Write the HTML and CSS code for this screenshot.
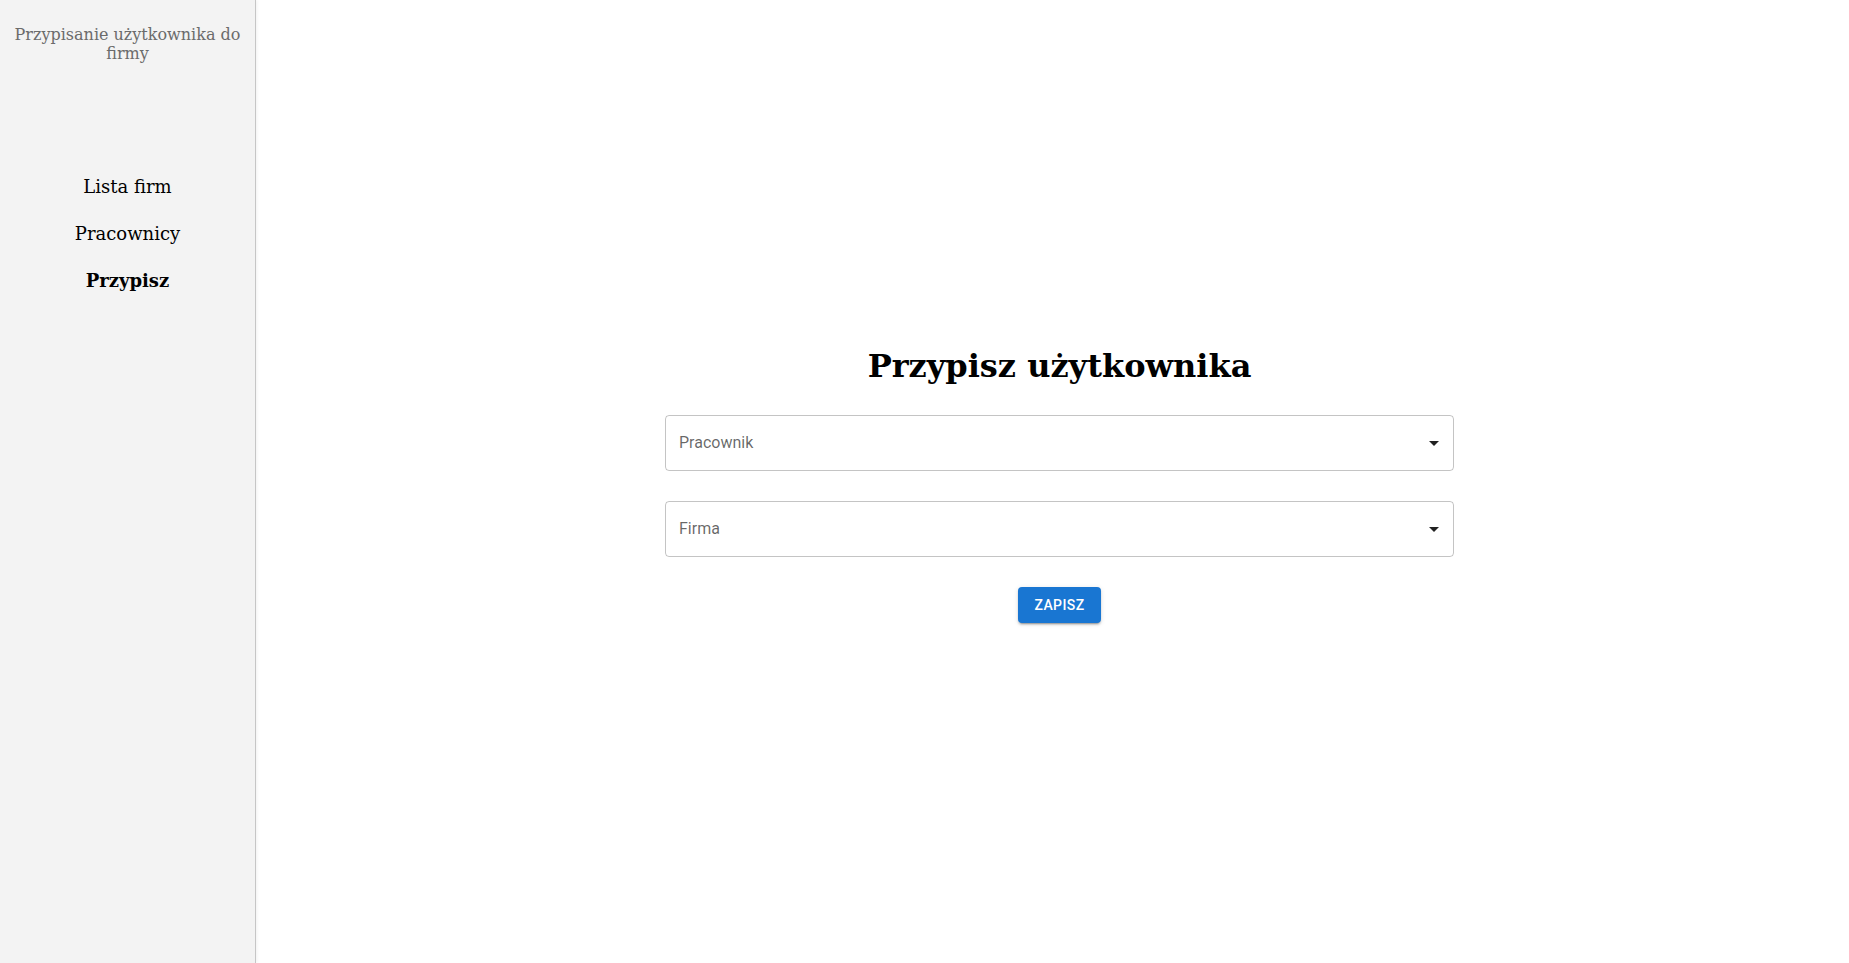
FILE: index.html
```html
<!DOCTYPE html>
<html lang="pl">
<head>
<meta charset="utf-8">
<title>Przypisz użytkownika</title>
<link rel="stylesheet" href="styles.css">
</head>
<body>
<aside class="sidebar">
  <div class="sidebar-title">Przypisanie użytkownika do firmy</div>
  <nav class="nav">
    <a class="nav-item" href="#">Lista firm</a>
    <a class="nav-item" href="#">Pracownicy</a>
    <a class="nav-item active" href="#">Przypisz</a>
  </nav>
</aside>
<main class="main">
  <h1 class="heading">Przypisz użytkownika</h1>
  <form class="form">
    <div class="select">
      <span class="select-label">Pracownik</span>
      <svg class="select-icon" viewBox="0 0 24 24" width="24" height="24"><path d="M7 10l5 5 5-5z"/></svg>
    </div>
    <div class="select">
      <span class="select-label">Firma</span>
      <svg class="select-icon" viewBox="0 0 24 24" width="24" height="24"><path d="M7 10l5 5 5-5z"/></svg>
    </div>
    <button type="button" class="btn">Zapisz</button>
  </form>
</main>
</body>
</html>
```

FILE: styles.css
```css
html, body {
  margin: 0;
  padding: 0;
  height: 100%;
}
body {
  display: flex;
  font-family: "DejaVu Serif", serif;
  background: #ffffff;
  color: #000;
}
.sidebar {
  width: 255px;
  flex: 0 0 255px;
  background: #f3f3f3;
  border-right: 1px solid #c6c6c6;
  box-shadow: 1px 0 3px rgba(0, 0, 0, 0.06);
  padding-top: 25px;
  box-sizing: content-box;
  text-align: center;
}
.sidebar-title {
  font-size: 16px;
  line-height: normal;
  color: #6b6b6b;
  padding: 0 10px;
}
.nav {
  display: flex;
  flex-direction: column;
  align-items: center;
  margin-top: 100px;
}
.nav-item {
  font-size: 18px;
  line-height: normal;
  padding: 13px 0;
  color: #000;
  text-decoration: none;
}
.nav-item.active {
  font-weight: bold;
}
.main {
  flex: 1;
  display: flex;
  flex-direction: column;
  align-items: center;
  justify-content: center;
  padding-left: 14px;
  padding-top: 7px;
}
.heading {
  font-size: 32px;
  font-weight: bold;
  line-height: normal;
  margin: 0 0 30px;
}
.form {
  width: 789px;
  display: flex;
  flex-direction: column;
  align-items: center;
  gap: 30px;
}
.select {
  width: 100%;
  height: 56px;
  box-sizing: border-box;
  border: 1px solid rgba(0, 0, 0, 0.23);
  border-radius: 4px;
  display: flex;
  align-items: center;
  padding: 0 7px 0 13px;
  font-family: Roboto, "Liberation Sans", sans-serif;
}
.select-label {
  flex: 1;
  font-size: 16px;
  color: rgba(0, 0, 0, 0.6);
}
.select-icon {
  fill: rgba(0, 0, 0, 0.87);
}
.btn {
  font-family: Roboto, "Liberation Sans", sans-serif;
  font-weight: 500;
  font-size: 14px;
  line-height: 1.75;
  letter-spacing: 0.02857em;
  text-transform: uppercase;
  color: #fff;
  background: #1976d2;
  border: 0;
  border-radius: 4px;
  padding: 6px 16px;
  min-width: 64px;
  box-shadow: 0 3px 1px -2px rgba(0,0,0,0.2), 0 2px 2px 0 rgba(0,0,0,0.14), 0 1px 5px 0 rgba(0,0,0,0.12);
  cursor: pointer;
}
```
